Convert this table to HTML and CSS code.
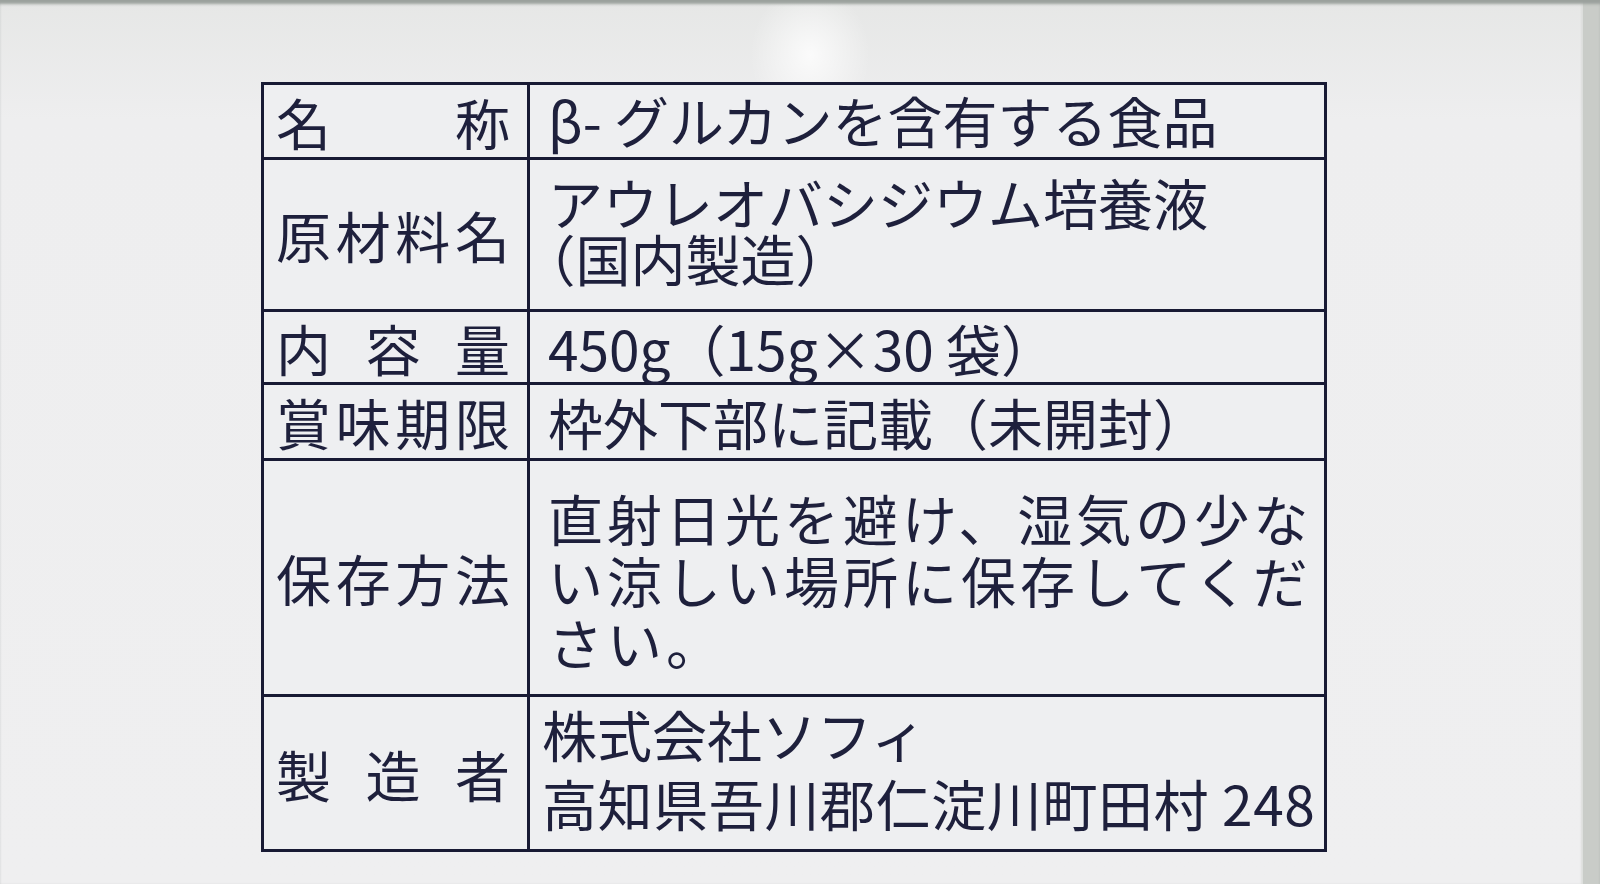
FILE: index.html
```html
<!DOCTYPE html>
<html lang="ja">
<head>
<meta charset="utf-8">
<title>食品表示</title>
<link rel="stylesheet" href="styles.css">
</head>
<body>
<div class="page">
  <div class="sheet">
    <div class="label r1"><span>名</span><span>称</span></div>
    <div class="value r1"><p class="txt">β- グルカンを含有する食品</p></div>

    <div class="label r2"><span>原</span><span>材</span><span>料</span><span>名</span></div>
    <div class="value r2 lh56"><p class="txt">アウレオバシジウム培養液<br><span class="halt">（国内製造）</span></p></div>

    <div class="label r3"><span>内</span><span>容</span><span>量</span></div>
    <div class="value r3"><p class="txt">450g（15g×30 袋）</p></div>

    <div class="label r4"><span>賞</span><span>味</span><span>期</span><span>限</span></div>
    <div class="value r4"><p class="txt">枠外下部に記載（未開封）</p></div>

    <div class="label r5"><span>保</span><span>存</span><span>方</span><span>法</span></div>
    <div class="value r5 lh62 wide"><p class="txt">直射日光を避け、湿気の少な<br>い涼しい場所に保存してくだ<br>さい。</p></div>

    <div class="label r6 last"><span>製</span><span>造</span><span>者</span></div>
    <div class="value r6 last lh69 near"><p class="txt">株式会社ソフィ<br><span class="addr">高知県吾川郡仁淀川町田村 248</span></p></div>
  </div>
</div>
</body>
</html>
```

FILE: styles.css
```css
html, body {
  margin: 0;
  padding: 0;
}

body {
  background: #ededee;
  font-family: "Noto Sans CJK JP", "Noto Sans", sans-serif;
  color: #1e203c;
}

.page {
  width: 1600px;
  height: 884px;
  box-sizing: border-box;
  padding: 82px 0 0 261px;
  background-color: #ededee;
  background-image:
    radial-gradient(ellipse 60px 70px at 810px 55px, rgba(255,255,255,0.8), rgba(255,255,255,0) 100%),
    linear-gradient(to bottom, #e6e7e6 0, #eeeeef 120px, #efeff0 100%);
  box-shadow:
    inset 0 5px 3px -1px #9ba19d,
    inset -17px 0 0 #c9ccc8,
    inset -19px 0 2px #dcdedc;
  overflow: hidden;
}

.sheet {
  width: 1066px;
  box-sizing: border-box;
  border: 3px solid #181a34;
  display: grid;
  grid-template-columns: 266px 797px;
  grid-template-rows: 75px 152px 73px 76px 236px 152px;
  background: #eeeff1;
}

.label,
.value {
  box-sizing: border-box;
  border-bottom: 3px solid #181a34;
  font-size: 55px;
  line-height: 1.1;
  display: flex;
  align-items: center;
  min-width: 0;
}

.label.last,
.value.last {
  border-bottom: none;
}

.label {
  border-right: 3px solid #181a34;
  justify-content: space-between;
  padding: 0 17px 0 12px;
}

.value {
  padding: 0 0 0 18px;
  white-space: nowrap;
}

.txt {
  margin: 0;
}

.r1.value { padding-bottom: 3px; }

.lh56 { line-height: 56px; padding-bottom: 12px; }
.lh62 { line-height: 62px; padding-top: 2px; }
.lh69 { line-height: 69px; padding-bottom: 10px; }

.halt { font-feature-settings: "halt"; }
.addr { letter-spacing: 0.6px; }

.wide { letter-spacing: 4px; }
.near { padding-left: 12px; }
```
